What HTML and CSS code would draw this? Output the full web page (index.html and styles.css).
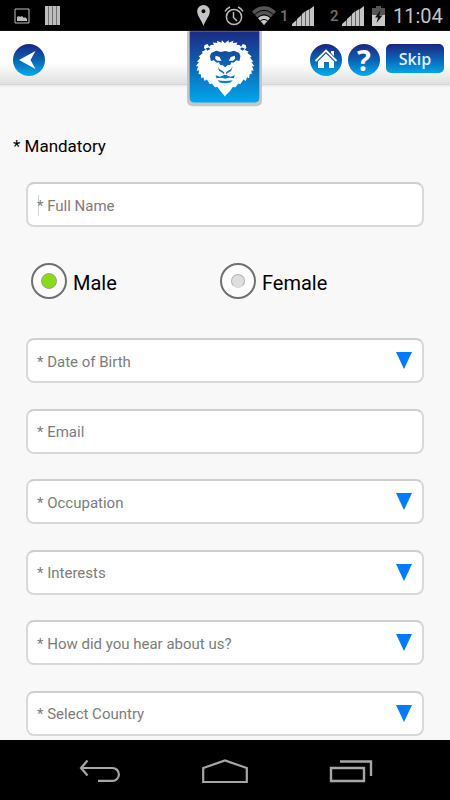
FILE: index.html
```html
<!DOCTYPE html>
<html lang="en">
<head>
<meta charset="utf-8">
<meta name="viewport" content="width=device-width, initial-scale=1">
<title>Registration</title>
<link rel="stylesheet" href="styles.css">
</head>
<body>
<div class="status">
  <div class="status-group">
    <svg width="16" height="16" viewBox="0 0 16 16"><path d="M1 1h14v14H1z" fill="none" stroke="#bebebe"/><path d="M3 13V9l2-1 1 1 2-1 2 2 1-1 2 2v2z" fill="#bebebe"/></svg>
    <svg width="15" height="19" viewBox="0 0 15 19"><path d="M0 0h15v19H0z" fill="#bdbdbd"/><path d="M3.500 0v19M7.500 0v19M11.500 0v19" stroke="#707070"/></svg>
  </div>
  <div class="status-group status-right">
    <svg class="pin" width="13" height="21" viewBox="0 0 13 21"><path fill="#c4c4c4" fill-rule="evenodd" d="M6.500 0A6.300 6.300 0 0 0 .2 6.300C.2 11 4.500 15 6.500 21 8.500 15 12.800 11 12.800 6.300A6.300 6.300 0 0 0 6.500 0zM6.500 4.200a2 2 0 1 1 0 4 2 2 0 0 1 0-4z"/></svg>
    <svg class="alarm" width="20" height="20" viewBox="0 0 20 20" fill="none" stroke="#b9b9b9" stroke-width="1.500"><circle cx="10" cy="11" r="7.600"/><path d="M9.500 6v5.500l3.500 3.500M1 5.500C2 3.500 3.500 2 6 1M19 5.500C18 3.500 16.500 2 14 1"/></svg>
    <svg class="wifi" width="24" height="19" viewBox="0 0 24 19"><path fill="#555" d="M0 5.500C7-1.500 17-1.500 24 5.500L12 19z"/><path fill="#c8c8c8" d="M6 12Q12 7 18 12L12 19z"/><path fill="none" stroke="#000" stroke-width="1" d="M2.500 8.500Q12 0 21.500 8.500M5 12Q12 5.500 19 12M8 15.300Q12 11.500 16 15.300"/></svg>
    <span class="sim sim-one">1</span>
    <svg class="signal" width="22" height="20" viewBox="0 0 22 20"><path fill="#c4c4c4" d="M0 20v-2l4.500-4v6zM5 20v-7l4.500-4v11zM10 20V8l3.500-3v15zM14 20V5l3.500-2v17zM18 20V3l4-3v20z"/></svg>
    <span class="sim sim-two">2</span>
    <svg class="signal" width="22" height="20" viewBox="0 0 22 20"><path fill="#c4c4c4" d="M0 20v-2l4.500-4v6zM5 20v-7l4.500-4v11zM10 20V8l3.500-3v15zM14 20V5l3.500-2v17zM18 20V3l4-3v20z"/></svg>
    <svg class="battery" width="13" height="20" viewBox="0 0 13 20"><path fill="#555" d="M4 0h5v2h4v7H0V2h4z"/><path fill="#c8c8c8" d="M0 9h13v11H0z"/><path d="M8.500 4L3 11.500h3L4.500 17 10.500 9.500h-3.200z" fill="#111"/></svg>
    <time class="clock">11:04</time>
  </div>
</div>

<header class="topbar">
  <button class="round back" type="button" aria-label="Back">
    <svg width="32" height="32" viewBox="0 0 32 32"><path fill="#fff" d="M6 16L22.500 7 17.500 16l5 9z"/></svg>
  </button>
  <div class="logo">
    <svg width="77" height="76" viewBox="45 18 232 228" role="img" aria-label="Lion">
      <defs>
        <linearGradient id="tile" gradientUnits="userSpaceOnUse" x1="0" y1="18" x2="0" y2="233"><stop offset="0" stop-color="#1c2a85"/><stop offset=".5" stop-color="#0c66b5"/><stop offset="1" stop-color="#00a8ec"/></linearGradient>
      </defs>
      <path fill="#c6c6c8" d="M48 18h226v208q0 18-18 18H66q-18 0-18-18z"/>
      <path fill="url(#tile)" d="M56 18h210v200q0 15-15 15H71q-15 0-15-15z"/>
      <g fill="#fff">
        <path d="M163 55L153 45 152 53 138 47 140 54 126 52 129 59 120 60 115 65 110 57 101 60 99 69 105 74 92 80 96 84 83 94 88 98 78 110 84 111 75 124 82 124 77 137 84 136 83 148 89 147 91 160 97 157 101 168 108 164 117 178 123 176 132 187 140 186 149 199 163 215z"/>
        <path d="M161 55L173 45 174 53 188 47 186 54 200 52 197 59 206 60 211 65 216 57 225 60 227 69 221 74 234 80 230 84 243 94 238 98 248 110 242 111 251 124 244 124 249 137 242 136 243 148 237 147 235 160 229 157 225 168 218 164 209 178 203 176 194 187 186 186 177 199 161 215z"/>
      </g>
      <g fill="url(#tile)">
        <path d="M104 70l10-3 4 5-8 5zM222 70l-10-3-4 5 8 5z"/>
        <path d="M117 93L121 84 136 77 150 81 163 78 176 81 190 77 205 84 209 93 206 108 197 106 188 113 182 112 178 120 170 121 163 127 156 121 148 120 144 112 138 113 129 106 120 108z"/>
      </g>
      <path fill="#fff" d="M134 92L146 96 152 107 139 107 133 101zM192 92L180 96 174 107 187 107 193 101z"/>
      <g fill="url(#tile)">
        <path d="M140 124l6 9 8 4 6 5v9h6v-9l6-5 8-4 6-9-5 14-10 5-8 9-8-9-10-5z"/>
        <path d="M134 151L147 155 160 150h6l13 5 13-4-3 9-15-2-11 3-11-3-15 2zM140 166Q163 171 186 166L179 173Q163 177 147 173z"/>
      </g>
    </svg>
  </div>
  <div class="actions">
    <button class="round" type="button" aria-label="Home">
      <svg width="32" height="32" viewBox="0 0 32 32"><path fill="none" stroke="#fff" stroke-width="1.800" d="M5.500 17L16 6.500 26.500 17"/><path fill="#fff" d="M8 17.500L16 9.500l8 8V24h-5v-6h-5v6H8zM21 7h3v5l-3-3z"/></svg>
    </button>
    <button class="round help" type="button" aria-label="Help">?</button>
    <button class="skip" type="button">Skip</button>
  </div>
</header>

<main class="page">
  <p class="mandatory">* Mandatory</p>
  <form class="form">
    <input class="field field-active" type="text" placeholder="* Full Name" aria-label="Full Name">
    <div class="gender">
      <label class="choice"><input type="radio" name="gender" checked><span>Male</span></label>
      <label class="choice"><input type="radio" name="gender"><span>Female</span></label>
    </div>
    <div class="fields">
      <select class="field" aria-label="Date of Birth"><option>* Date of Birth</option></select>
      <input class="field" type="email" placeholder="* Email" aria-label="Email">
      <select class="field" aria-label="Occupation"><option>* Occupation</option></select>
      <select class="field" aria-label="Interests"><option>* Interests</option></select>
      <select class="field" aria-label="How did you hear about us?"><option>* How did you hear about us?</option></select>
      <select class="field" aria-label="Select Country"><option>* Select Country</option></select>
    </div>
  </form>
</main>

<nav class="navbar">
  <button type="button" aria-label="Back"><svg width="42" height="24" viewBox="0 0 42 24" fill="none" stroke="#a6a6a6" stroke-width="2.200"><path d="M2 9h31.500a6.400 6.400 0 0 1 0 12.800H19M8.500 1.500L2 9l6.500 7.500"/></svg></button>
  <button type="button" aria-label="Home"><svg width="46" height="26" viewBox="0 0 46 26" fill="none" stroke="#a6a6a6" stroke-width="2.200"><path d="M1.200 10L23 2.500 44.800 10v14H1.200z"/></svg></button>
  <button type="button" aria-label="Recent apps"><svg width="44" height="24" viewBox="0 0 44 24" fill="none" stroke="#a6a6a6" stroke-width="2.400"><path d="M2 9h33v13H2zM11 2.500h31V17"/></svg></button>
</nav>
</body>
</html>
```
FILE: styles.css
```css
* {
  box-sizing: border-box;
}

body {
  margin: 0;
  min-height: 100vh;
  display: flex;
  flex-direction: column;
  background: #f8f8f8;
  color: #000;
  font-family: Roboto, "Liberation Sans", sans-serif;
}

button {
  padding: 0;
  border: 0;
  background: none;
  font-family: inherit;
}

svg {
  display: block;
}

.status {
  display: flex;
  justify-content: space-between;
  align-items: center;
  height: 31px;
  padding: 0 8px 0 14px;
  background: #000;
}

.status-group {
  display: flex;
  align-items: center;
  gap: 15px;
}

.status-right {
  gap: 8px;
}

.alarm {
  margin-left: 6px;
}

.sim {
  width: 8px;
  margin-right: -4px;
  color: #707070;
  font-size: 15px;
  font-weight: 500;
  line-height: 16px;
}

.sim-one {
  margin-left: -4px;
}

.sim-two {
  margin-left: 8px;
}

.clock {
  width: 49px;
  color: #c4c4c4;
  font-size: 20px;
  line-height: 30px;
  white-space: nowrap;
}

.topbar {
  display: grid;
  grid-template-columns: 1fr auto 1fr;
  align-items: start;
  height: 54px;
  padding: 0 6px 0 5px;
  background: linear-gradient(#fff 60%, #e0e0e0);
  border-bottom: 1px solid #d6d6d6;
  box-shadow: 0 1px 2px #e4e4e4;
}

.round {
  width: 32px;
  height: 32px;
  margin-top: 13px;
  border-radius: 50%;
  background: linear-gradient(#1c2580, #0b62b3 50%, #00aeef);
  color: #fff;
}

.back {
  margin-left: 8px;
}

.logo {
  grid-column: 2;
}

.actions {
  display: flex;
  justify-content: flex-end;
  gap: 6px;
}

.help {
  font-family: "Open Sans", sans-serif;
  font-size: 29px;
  font-weight: 700;
  line-height: 32px;
}

.skip {
  width: 58px;
  height: 29px;
  margin-top: 13px;
  border-radius: 5px;
  background: linear-gradient(#1c2580, #0b62b3 50%, #00a4e8);
  color: #e6f1fa;
  font-family: "Open Sans", sans-serif;
  font-size: 16px;
  font-weight: 600;
}

.page {
  flex: 1;
  display: flex;
  flex-direction: column;
  padding: 51px 26px 4px;
}

.mandatory {
  margin: 0 0 26px -13px;
  font-size: 17px;
  line-height: 20px;
}

.form {
  flex: 1;
  display: flex;
  flex-direction: column;
}

.field {
  display: block;
  width: 100%;
  height: 45px;
  padding: 2px 10px 0 9px;
  border: 2px solid #d8d8d8;
  border-top-color: #cecece;
  border-radius: 8px;
  outline: 0;
  background-color: #fff;
  color: #7c7c7c;
  font-family: inherit;
  font-size: 15px;
}

.field::placeholder {
  color: #7c7c7c;
  opacity: 1;
}

.field-active {
  background-image: linear-gradient(#d4d4d4, #d4d4d4);
  background-repeat: no-repeat;
  background-position: 10px 11px;
  background-size: 1px 21px;
}

select.field {
  appearance: none;
  background-image: url("data:image/svg+xml,%3Csvg xmlns='http://www.w3.org/2000/svg' width='16' height='17'%3E%3Cpath d='M0 0h16L8 17z' fill='%23007aff'/%3E%3C/svg%3E");
  background-repeat: no-repeat;
  background-position: right 10px top 12px;
}

.gender {
  display: grid;
  grid-template-columns: 189px 1fr;
  margin: 36px 0 39px 5px;
}

.choice {
  display: flex;
  align-items: center;
  gap: 6px;
  font-size: 20px;
  line-height: 24px;
}

.choice span {
  padding-top: 4px;
}

.choice input {
  appearance: none;
  display: grid;
  place-items: center;
  width: 36px;
  height: 36px;
  margin: 0;
  border: 2px solid #707070;
  border-radius: 50%;
  background: #fcfcfc;
}

.choice input::before {
  content: "";
  width: 12px;
  height: 12px;
  border: 1px solid #b4b4b4;
  border-bottom-color: #d8d8d8;
  border-radius: 50%;
  background: #dedede;
}

.choice input:checked::before {
  width: 14px;
  height: 14px;
  border-color: #93ac74;
  background: linear-gradient(#8fd820, #84dc10);
}

.fields {
  flex: 1;
  display: flex;
  flex-direction: column;
  justify-content: space-between;
  gap: 16px;
}

.navbar {
  display: flex;
  justify-content: space-between;
  align-items: center;
  height: 60px;
  padding: 2px 77px 0 79px;
  background: #000;
}
```
